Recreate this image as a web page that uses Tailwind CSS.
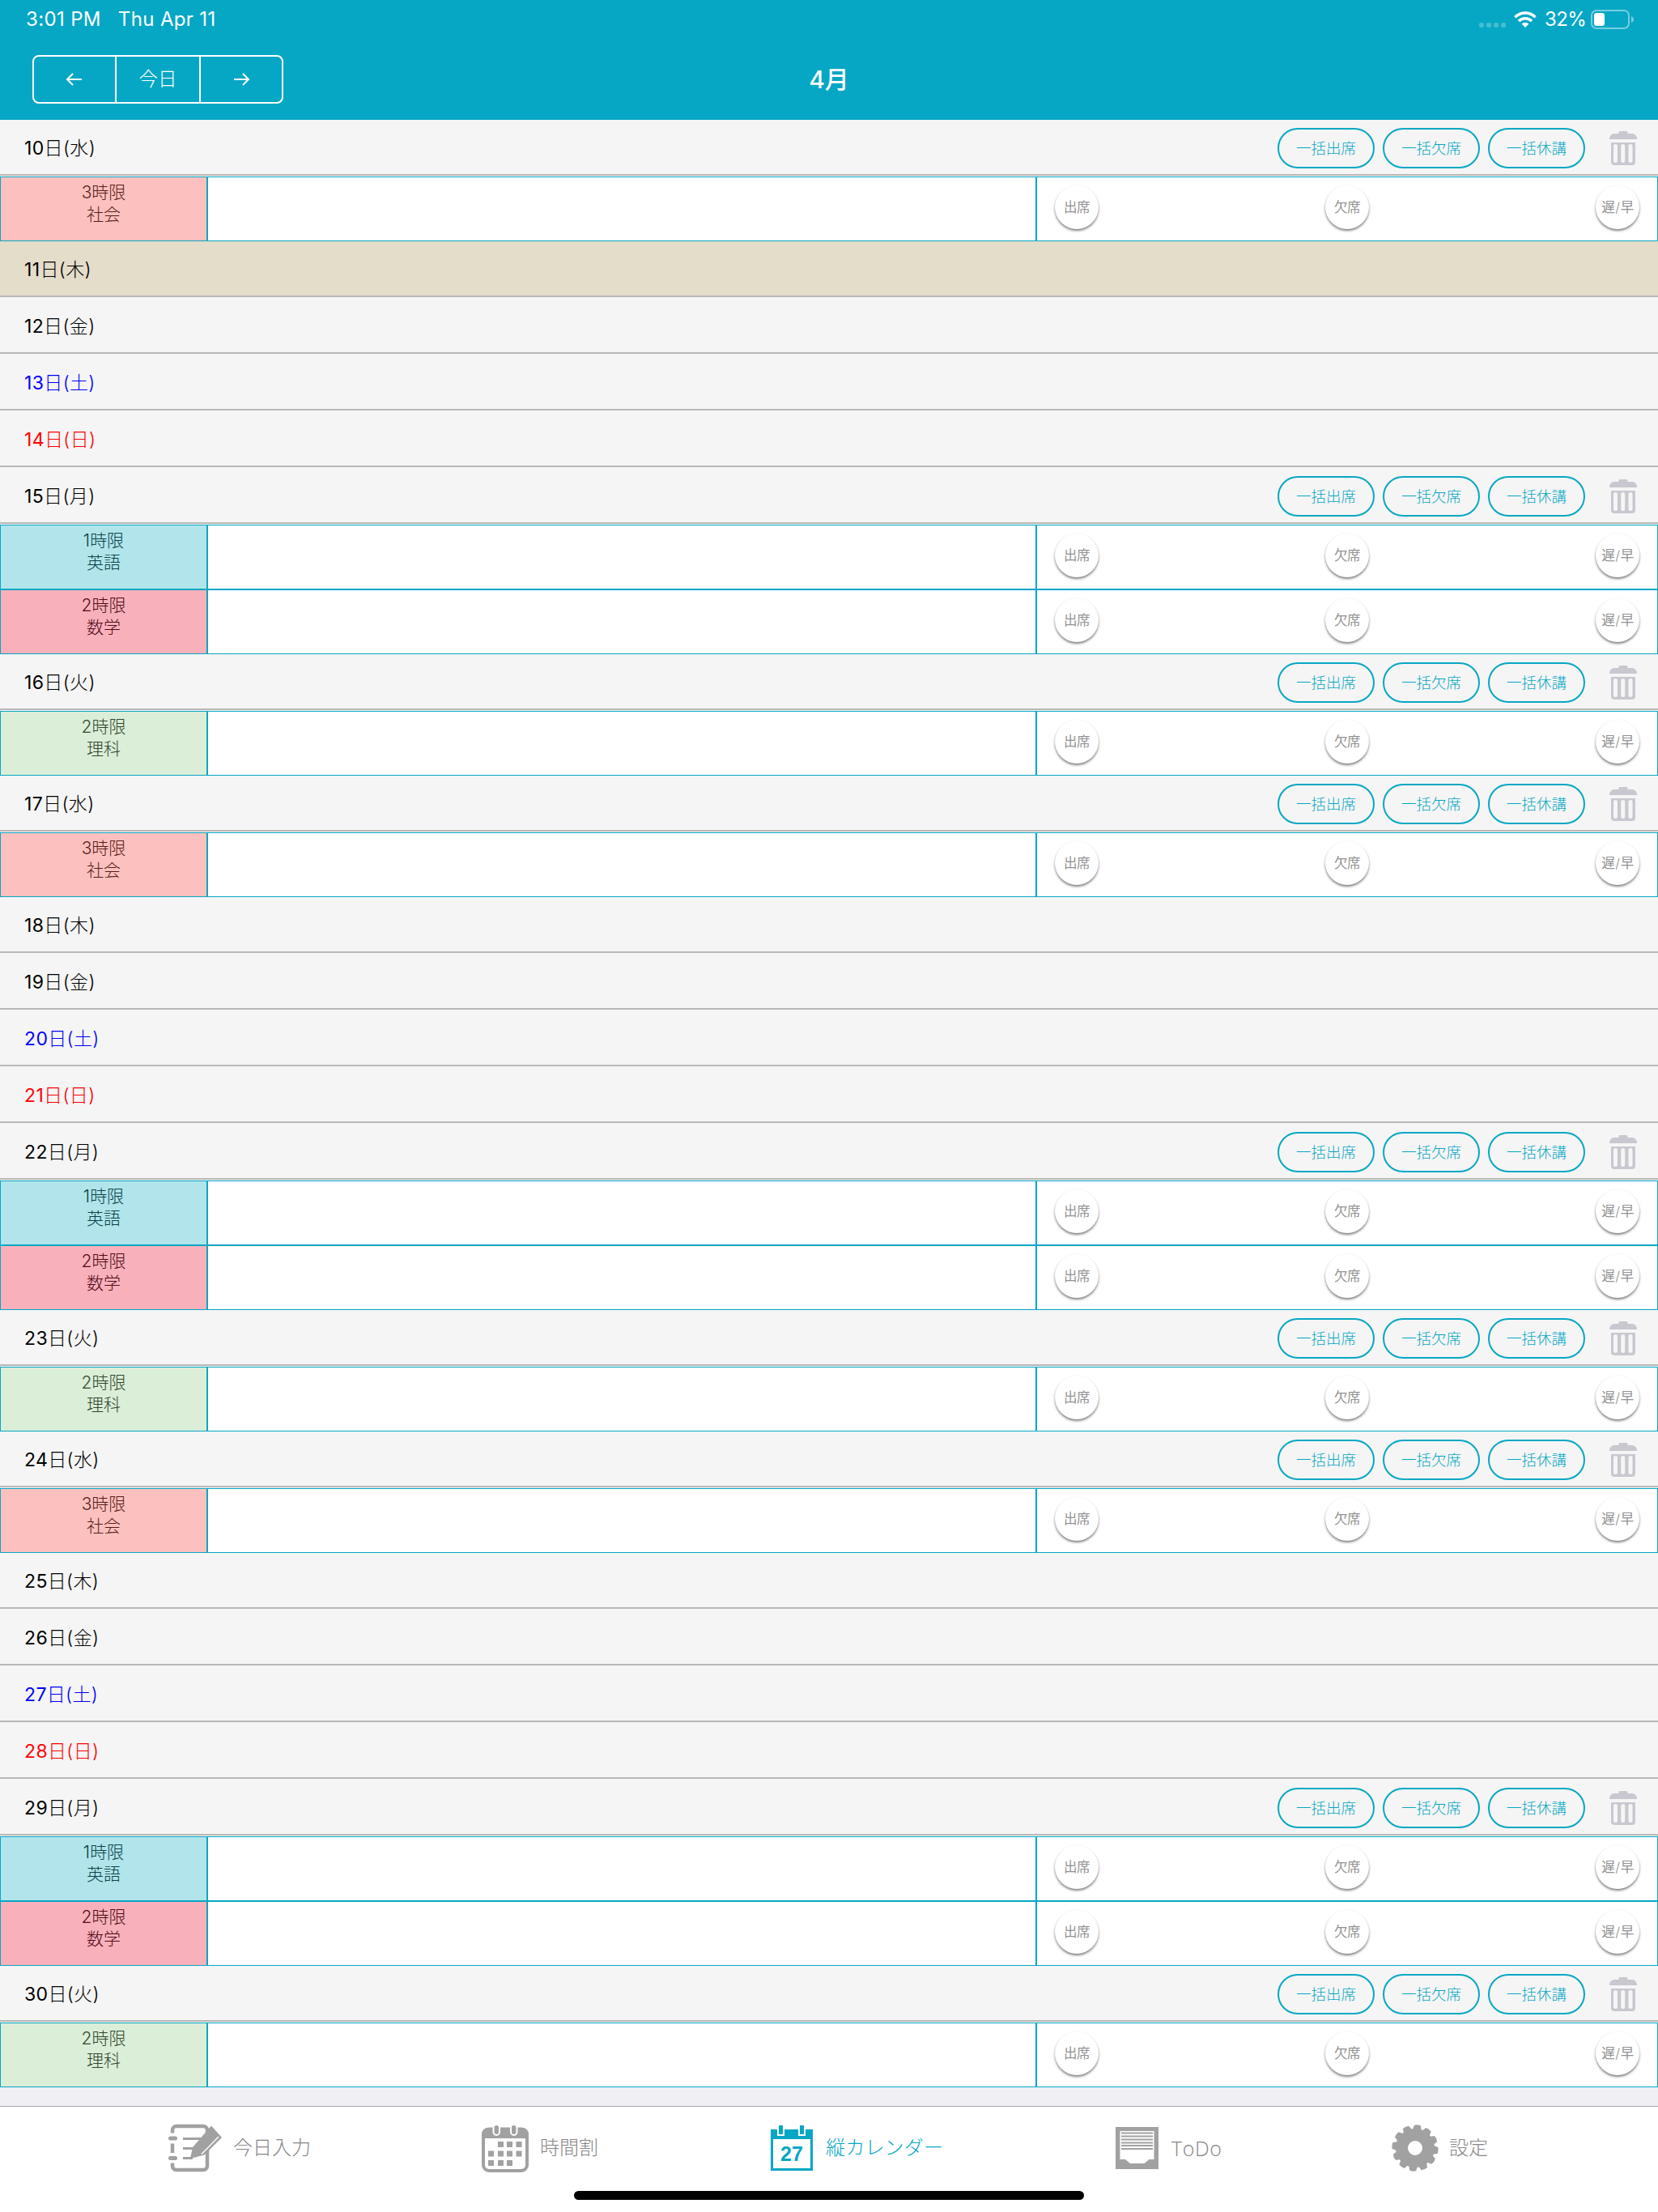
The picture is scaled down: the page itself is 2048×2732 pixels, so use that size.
<!DOCTYPE html>
<html lang="ja">
<head>
    <meta charset="UTF-8">
    <meta name="viewport" content="width=device-width, initial-scale=1.0">
    <title>縦カレンダー - 4月</title>
    <script src="https://cdn.jsdelivr.net/npm/@tailwindcss/browser@4"></script>
</head>
<body class="w-[2048px] h-[2732px] overflow-hidden flex flex-col bg-[#efeff4] font-['Inter','Noto_Sans_CJK_JP',sans-serif]">
    <!-- Status bar + navigation -->
    <header class="h-[148px] shrink-0 bg-[#06a7c4] text-white flex flex-col">
        <div class="h-12 flex items-center justify-between pl-8 pr-[30px] text-[24px] leading-none">
            <div class="flex items-center gap-[21px] tracking-[0.35px]">
                <span>3:01 PM</span>
                <span>Thu Apr 11</span>
            </div>
            <div class="flex items-center">
                <div class="flex gap-[3px] mr-[10px] pt-[14px]">
                    <i class="size-1.5 rounded-xs bg-white/25"></i>
                    <i class="size-1.5 rounded-xs bg-white/25"></i>
                    <i class="size-1.5 rounded-xs bg-white/25"></i>
                    <i class="size-1.5 rounded-xs bg-white/25"></i>
                </div>
                <svg class="w-7 h-5" viewBox="0 0 28 20" fill="none" stroke="white" stroke-width="3.6">
                    <path d="M1.4 7.2a17.8 17.8 0 0 1 25.2 0"/>
                    <path d="M6 12a11.4 11.4 0 0 1 16 0"/>
                    <path d="M14 20l-4.4-4.5a6.3 6.3 0 0 1 8.8 0z" fill="white" stroke="none"/>
                </svg>
                <span class="w-[50px] ml-[10px] tracking-[-0.6px]">32%</span>
                <svg class="w-[53px] h-6 ml-[7px]" viewBox="0 0 53 24">
                    <rect x="1" y="1" width="46" height="22" rx="6" fill="none" stroke="white" stroke-opacity=".45" stroke-width="2"/>
                    <rect x="4" y="4" width="13" height="16" rx="3" fill="white"/>
                    <path d="M50 8q3 1.200 3 4t-3 4z" fill="white" fill-opacity=".45"/>
                </svg>
            </div>
        </div>
        <div class="h-[100px] grid grid-cols-3 items-start px-10 pt-5">
            <div class="w-[310px] h-[60px] flex border-2 border-white rounded-lg divide-x-2 divide-white">
                <button class="w-[102px] pr-0.5 flex items-center justify-center">
                    <svg class="w-5 h-4" viewBox="0 0 20 16" fill="none" stroke="white" stroke-width="2"><path d="M20 8H2M9 1L2 8l7 7"/></svg>
                </button>
                <button class="w-[104px] text-[23.500px] font-light flex items-center justify-center">今日</button>
                <button class="flex-1 pl-0.5 flex items-center justify-center">
                    <svg class="w-5 h-4" viewBox="0 0 20 16" fill="none" stroke="white" stroke-width="2"><path d="M0 8h18M11 1l7 7-7 7"/></svg>
                </button>
            </div>
            <h1 class="h-[60px] flex items-center justify-center text-[30px] font-medium">4月</h1>
        </div>
    </header>

    <!-- Calendar -->
    <main id="calendar" class="flex-1 relative"></main>

    <!-- Tab bar -->
    <footer class="h-[131px] shrink-0 bg-white border-t border-[#a7a7aa] flex flex-col justify-between">
        <nav class="h-[102px] pl-[208px] flex items-center text-[24px] text-[#868686] font-light leading-none whitespace-nowrap">
            <a class="w-[387px] flex items-center gap-3.5">
                <svg class="w-[66px] h-[60px]" viewBox="0 0 66 60">
                    <rect x="5" y="3" width="43" height="54" rx="5" fill="none" stroke="#a1a1a1" stroke-width="4.500"/>
                    <path d="M0 11.500h11v13H0zM0 36h11v12.500H0z" fill="white"/>
                    <rect x="0" y="15.500" width="11" height="5" rx="2.500" fill="#a1a1a1"/>
                    <rect x="0" y="40" width="11" height="5" rx="2.500" fill="#a1a1a1"/>
                    <path d="M18 18.500h22M18 30.500h14M18 42.500h12" stroke="#a1a1a1" stroke-width="3"/>
                    <path d="M53 2.500L66 17 44.500 38.500 27 43l3-14z" fill="#a1a1a1"/>
                    <path d="M62 16L41 37.500" stroke="white" stroke-width="1.400"/>
                </svg>
                <span>今日入力</span>
            </a>
            <a class="w-[357px] flex items-center gap-3.5">
                <svg class="w-[58px] h-[60px]" viewBox="0 0 58 60">
                    <rect x="2" y="6.500" width="54" height="51.500" rx="7" fill="none" stroke="#a1a1a1" stroke-width="4"/>
                    <path d="M0 18V13a8 8 0 0 1 8-8h42a8 8 0 0 1 8 8v5z" fill="#a1a1a1"/>
                    <rect x="14.500" y="1" width="7.500" height="13" rx="3.700" fill="#a1a1a1" stroke="white" stroke-width="2"/>
                    <rect x="36" y="1" width="7.500" height="13" rx="3.700" fill="#a1a1a1" stroke="white" stroke-width="2"/>
                    <path d="M20 22h7v7h-7zM31 22h7v7h-7zM42.500 22h7v7h-7zM8 33.500h7v7H8zM20 33.500h7v7h-7zM31 33.500h7v7h-7zM42.500 33.500h7v7h-7zM8 45h7v7H8zM20 45h7v7h-7zM31 45h7v7h-7z" fill="#a1a1a1"/>
                </svg>
                <span>時間割</span>
            </a>
            <a class="w-[426px] flex items-center gap-4 text-[#06a7c4]">
                <svg class="w-[52px] h-14" viewBox="0 0 52 56">
                    <path d="M0 5h52v51H0z" fill="#06a7c4"/>
                    <path d="M3 17h46v36H3z" fill="white"/>
                    <path d="M8 0h9v13H8zM34 0h9v13h-9z" fill="white"/>
                    <path d="M10 0h5v11h-5zM36 0h5v11h-5z" fill="#06a7c4"/>
                    <text x="26" y="44" text-anchor="middle" font-family="Liberation Sans, sans-serif" font-weight="700" font-size="25" fill="#06a7c4">27</text>
                </svg>
                <span class="tracking-[0.2px]">縦カレンダー</span>
            </a>
            <a class="w-[341px] flex items-center gap-4">
                <svg class="w-[53px] h-[52px]" viewBox="0 0 53 52">
                    <path d="M0 0h53v52H0z" fill="#a1a1a1"/>
                    <path d="M5.500 5h42v35h-6l-6 5H18l-6-5H5.500z" fill="white"/>
                    <path d="M7 7.500h39M7 11.500h39M7 15.500h39M7 19.500h39M7 23h39M7 27h39" stroke="#a1a1a1" stroke-width="1.800"/>
                </svg>
                <span class="text-[25px] tracking-[0.6px] font-['Open_Sans']">ToDo</span>
            </a>
            <a class="flex items-center gap-[13px]">
                <svg class="size-[58px]" viewBox="-29 -29 58 58">
                    <g id="gear" fill="#a1a1a1"></g>
                    <circle r="16.500" fill="none" stroke="#a1a1a1" stroke-width="15"/>
                </svg>
                <span>設定</span>
            </a>
        </nav>
        <div class="w-[630px] h-[11px] mb-[15px] mx-auto rounded-full bg-black"></div>
    </footer>

    <script>
        const subjects = {
            '英語': { period: 1, color: 'bg-[#b1e5eb] text-[#0b4148]' },
            '数学': { period: 2, color: 'bg-[#f8b1bb] text-[#4f0a14]' },
            '理科': { period: 2, color: 'bg-[#dbeed8] text-[#31452e]' },
            '社会': { period: 3, color: 'bg-[#fcc1be] text-[#571a17]' }
        };
        const timetable = { '月': ['英語', '数学'], '火': ['理科'], '水': ['社会'] };
        const today = 11;

        const trash = `
            <svg class="w-[34px] h-[42px] ml-[30px]" viewBox="0 0 34 42" fill="#c9c8d0">
                <path d="M0 10V8q2-5 6-5h5.500V1.500Q11.500 0 13 0h8q1.500 0 1.500 1.500V3H28q4 0 6 5v2z"/>
                <path fill-rule="evenodd" d="M2 14h30v24q0 4-4 4H6q-4 0-4-4zM5 18v18.500a2.500 2.500 0 0 0 5 0V18q0-2-2.500-2T5 18zM14.200 18v18.500a2.500 2.500 0 0 0 5 0V18q0-2-2.500-2t-2.500 2zM23.500 18v18.500a2.500 2.500 0 0 0 5 0V18q0-2-2.500-2t-2.500 2z"/>
            </svg>`;

        const bulk = label => `<button class="w-[120px] h-[50px] border-2 border-[#06a7c4] rounded-full text-[18.500px] leading-none text-[#06a7c4] font-light flex items-center justify-center">${label}</button>`;
        const mark = label => `<button class="size-[54px] rounded-full bg-white text-[16.500px] leading-none text-[#929292] flex items-center justify-center tracking-tight shadow-[0_2px_3px_rgba(0,0,0,0.5)]">${label}</button>`;

        const dayRow = (d, w, has) => {
            const color = w === '土' ? 'text-[#0000ff]' : w === '日' ? 'text-[#ff0000]' : 'text-black';
            const bg = d === today ? 'bg-[#e4ddca]' : 'bg-[#f5f5f5]';
            return `
            <div class="h-[70px] bg-[#f5f5f5]">
                <div class="h-[69px] flex items-center justify-between pl-[30px] pr-[26px] border-b-2 border-[#b8b8b7] ${bg}">
                    <span class="text-[23px] tracking-[0.35px] pt-[3px] leading-none ${color}">${d}<span class="font-light">日</span><span class="font-light">(</span><span class="font-light">${w}</span><span class="font-light">)</span></span>
                    ${has ? `<div class="flex items-center pt-[3px]"><div class="flex gap-2.5">${bulk('一括出席')}${bulk('一括欠席')}${bulk('一括休講')}</div>${trash}</div>` : ''}
                </div>
            </div>`;
        };

        const lessonRow = name => `
            <div class="h-20 grid grid-cols-[256px_1024px_768px] bg-white text-[21px]">
                <div class="border border-[#06a7c4] pt-[5px] text-center leading-[27px] font-light ${subjects[name].color}"><span class="font-[350]">${subjects[name].period}</span>時限<br>${name}</div>
                <div class="border border-[#06a7c4]"></div>
                <div class="border border-[#06a7c4] flex items-start justify-between pt-2.5 pl-[22px] pr-[22px]">
                    ${mark('出席')}${mark('欠席')}${mark('遅<span class="font-light px-px">/</span>早')}
                </div>
            </div>`;

        let html = '';
        for (let d = 10; d <= 30; d++) {
            const w = '日月火水木金土'[d % 7];
            const lessons = timetable[w] || [];
            html += dayRow(d, w, lessons.length) + lessons.map(lessonRow).join('');
        }
        document.getElementById('calendar').innerHTML = html;

        // 12 teeth round the gear
        let teeth = '';
        for (let i = 0; i < 12; i++) {
            teeth += `<path d="M-5.500-22L-4-28q4-1.500 8 0l1.500 6z" transform="rotate(${i * 30 + 6})"/>`;
        }
        document.getElementById('gear').innerHTML = teeth;
    </script>
</body>
</html>
